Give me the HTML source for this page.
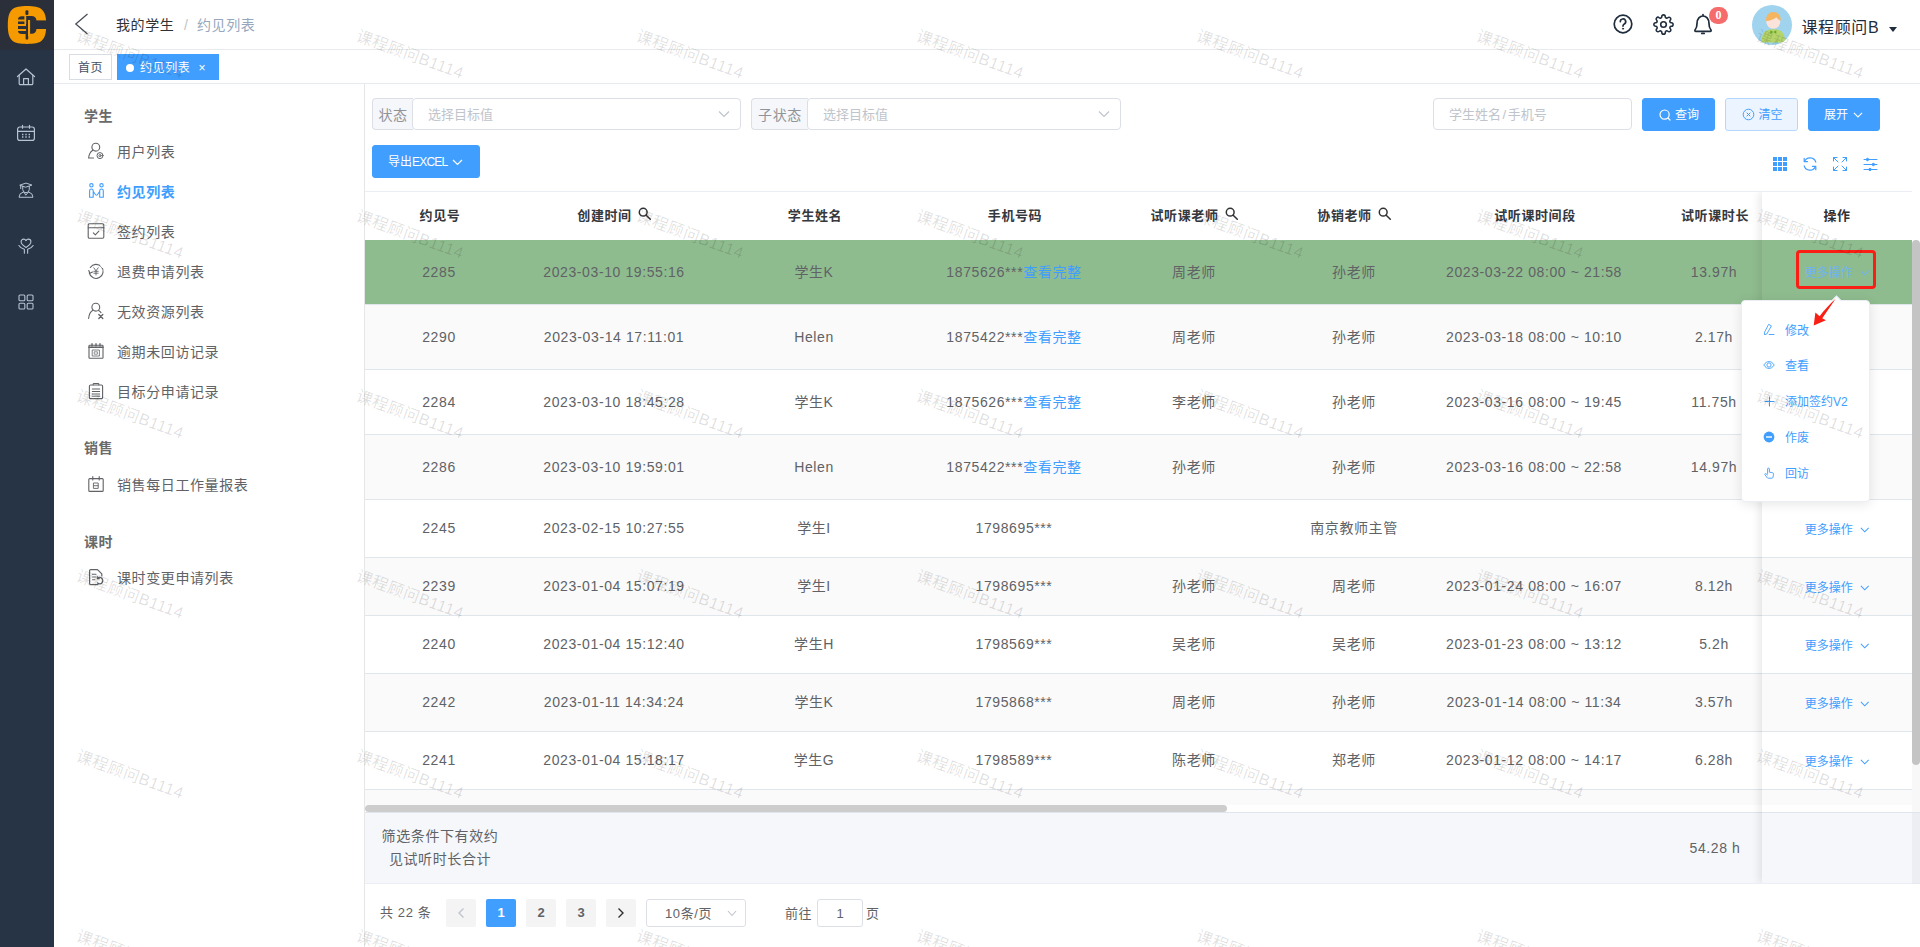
<!DOCTYPE html>
<html lang="zh-CN">
<head>
<meta charset="utf-8">
<title>约见列表</title>
<style>
*{box-sizing:border-box;margin:0;padding:0}
html,body{width:1920px;height:947px;overflow:hidden;background:#fff}
body{position:relative;font-family:"Liberation Sans","Noto Sans CJK SC",sans-serif;font-size:14px;color:#606266;letter-spacing:.6px}
.abs{position:absolute}
.ns{letter-spacing:0}
svg{display:block}
#side{position:absolute;left:0;top:0;width:54px;height:947px;background:#263445}
#logo{position:absolute;left:0;top:0;width:54px;height:50px;background:#2b2f3a}
.sico{position:absolute;left:15px;width:22px;height:22px}
#hdr{position:absolute;left:54px;top:0;width:1866px;height:50px;background:#fff;border-bottom:1px solid #e8eaee}
#tags{position:absolute;left:54px;top:50px;width:1866px;height:34px;background:#fff;border-bottom:1px solid #e6e9ef}
.tag{position:absolute;top:4px;height:26px;line-height:26px;font-size:12px;border:1px solid #d8dce5;color:#495060;background:#fff;padding:0 8px;white-space:nowrap}
.tag.on{background:#409eff;border-color:#409eff;color:#fff}
#menu{position:absolute;left:54px;top:84px;width:311px;height:863px;background:#fff;border-right:1px solid #e6e6e6}
.mt{position:absolute;left:30px;font-size:14px;font-weight:700;color:#6a6a6a;line-height:20px;height:20px}
.mi{position:absolute;left:63px;font-size:14px;color:#606266;line-height:20px;height:20px;white-space:nowrap}
.mi.on{color:#409eff;font-weight:700}
.mico{position:absolute;left:33px;width:18px;height:18px}
#main{position:absolute;left:365px;top:84px;width:1555px;height:863px;background:#fff}
.lab{position:absolute;top:14px;height:32px;line-height:32px;background:#f5f7fa;border:1px solid #dcdfe6;border-right:0;border-radius:4px 0 0 4px;color:#909399;font-size:14px;text-align:center}
.sel{position:absolute;top:14px;height:32px;line-height:32px;border:1px solid #dcdfe6;border-radius:4px;background:#fff;color:#c0c4cc;font-size:13px;padding-left:15px;letter-spacing:0}
.btn{position:absolute;height:33px;border-radius:3px;background:#409eff;border:1px solid #409eff;color:#fff;font-size:12px;line-height:33px;white-space:nowrap;letter-spacing:0}
.btn.plain{background:#ecf5ff;border-color:#b3d8ff;color:#409eff}
.chev{position:absolute;right:10px;top:11px;width:12px;height:8px}
#tbl{position:absolute;left:0;top:107px;width:1547px;height:692px;border-top:1px solid #ebeef5}
.th{position:absolute;top:0;height:48px;line-height:47px;text-align:center;font-weight:700;color:#35383d;font-size:13px;white-space:nowrap}
.row{position:absolute;left:0;width:1547px;border-bottom:1px solid #dfe6ec;background:#fff;overflow:hidden}
.row.s{background:#fafafa}
.row.g{background:#8fbc8f}
.c{position:absolute;top:0;height:100%;text-align:center;white-space:nowrap;color:#606266;font-size:14px}
.r65 .c{line-height:64px}
.r58 .c{line-height:57px}
.lk{color:#409eff}
#fix{position:absolute;left:1397px;top:108px;width:150px;height:691px;box-shadow:-3px 0 8px rgba(0,0,0,.09);clip-path:inset(0 0 0 -14px)}
.more{position:absolute;left:0;width:150px;text-align:center;font-size:12px;color:#409eff;white-space:nowrap;letter-spacing:0}
#dd{position:absolute;left:1741px;top:300px;width:129px;height:202px;background:#fff;border:1px solid #ebeef5;border-radius:4px;box-shadow:0 2px 12px 0 rgba(0,0,0,.1);letter-spacing:0}
#dd .it{position:absolute;left:43px;font-size:12px;color:#409eff;line-height:20px;white-space:nowrap}
#dd svg{position:absolute;left:21px}
#wm{position:absolute;left:0;top:0;width:1920px;height:947px;overflow:hidden;pointer-events:none}
#wm span{position:absolute;width:160px;height:24px;margin-left:-80px;margin-top:-12px;line-height:24px;text-align:center;font-size:16px;color:rgba(0,0,0,.13);transform:rotate(20deg);white-space:nowrap;letter-spacing:.55px}
</style>
</head>
<body>
<div id="side"><div id="logo">
<svg width="54" height="50" viewBox="0 0 54 50">
<path d="M27 6C41 6 46.200 9 46.200 25C46.200 41 41 43.900 27 43.900C13 43.900 7.800 41 7.800 25C7.800 9 13 6 27 6Z" fill="#f59a00"/>
<rect x="36" y="20.400" width="11" height="8.600" fill="#2b2f3a"/>
<path d="M26 15.900H31.500C34.500 15.900 36.400 17.500 36.400 20.400V29C36.400 32 34.500 33.800 31.500 33.800H26Z" fill="#2b2f3a"/>
<path d="M18 19.600C18 17.400 19.600 16.300 21.800 16.300H24.600V19.600Z M18 21.600H24.600V23.900H18Z M18 26H27.600V28.900H18Z M18 31H27.600V33.900H21.800C19.600 33.900 18 32.900 18 31Z" fill="#2b2f3a"/>
<rect x="25.400" y="10.200" width="3" height="4.800" rx="1.200" fill="#2b2f3a"/>
<rect x="25.600" y="31" width="2.600" height="8.600" rx="1.200" fill="#2b2f3a"/>
<rect x="28" y="20" width="2.100" height="16" fill="#f59a00"/>
<rect x="24.600" y="15.900" width="1.600" height="8" fill="#f59a00"/>
</svg></div>
<svg class="sico" style="top:66px" viewBox="0 0 22 22" fill="none" stroke="#b9c4d2" stroke-width="1.200" stroke-linejoin="round" stroke-linecap="round"><path d="M2.500 10.500L11 3l8.500 7.500"/><path d="M4.200 9.500V17.500a1.200 1.200 0 0 0 1.200 1.200H16.600a1.200 1.200 0 0 0 1.200-1.200V9.500"/><path d="M8.600 18.500V12.600h4.800V18.500"/></svg>
<svg class="sico" style="top:122px" viewBox="0 0 22 22" fill="none" stroke="#b9c4d2" stroke-width="1.200" stroke-linejoin="round" stroke-linecap="round"><rect x="2.600" y="5" width="16.800" height="13.400" rx="2.200"/><path d="M2.600 9.300H19.400M7.500 3.300V6.200M14.500 3.300V6.200"/><path d="M7 12.600h1.400M10.300 12.600h1.400M13.600 12.600h1.400M7 14.900h1.400M10.300 14.900h1.400M13.600 14.900h1.400" stroke-width="1.500" stroke-linecap="butt"/></svg>
<svg class="sico" style="top:179.5px;left:16px;width:20px;height:20px" viewBox="0 0 22 22" fill="none" stroke="#b9c4d2" stroke-width="1.100" stroke-linejoin="round" stroke-linecap="round"><path d="M4.500 5.600L11 3.400l6.500 2.200L11 7.800Z"/><path d="M5.200 6.200V9.500M7.400 7V10.400a3.600 3.600 0 0 0 7.200 0V7"/><path d="M8.300 13.200L4.600 15.200L3.300 19H18.700L17.400 15.200L13.700 13.200L11 16.400Z"/></svg>
<svg class="sico" style="top:235.5px;left:16px;width:20px;height:20px" viewBox="0 0 22 22" fill="none" stroke="#b9c4d2" stroke-width="1.200" stroke-linejoin="round" stroke-linecap="round"><path d="M11 12.600C6.800 10 5.600 8 5.600 6.300C5.600 4.500 7 3.400 8.400 3.400C9.600 3.400 10.500 4.100 11 5.100C11.500 4.100 12.400 3.400 13.600 3.400C15 3.400 16.400 4.500 16.400 6.300C16.400 8 15.200 10 11 12.600Z"/><path d="M3.200 10.500C4.500 13 6.800 13.800 9.200 14.600V19M18.800 10.500C17.500 13 15.200 13.800 12.800 14.600V19"/></svg>
<svg class="sico" style="top:291.5px;left:16px;width:20px;height:20px" viewBox="0 0 22 22" fill="none" stroke="#b9c4d2" stroke-width="1.200" stroke-linejoin="round"><rect x="3.300" y="3.300" width="6.400" height="6.400" rx="1.200"/><rect x="12.300" y="3.300" width="6.400" height="6.400" rx="1.200"/><rect x="3.300" y="12.300" width="6.400" height="6.400" rx="1.200"/><rect x="12.300" y="12.300" width="6.400" height="6.400" rx="1.200"/></svg>
</div>
<div id="hdr">
<svg class="abs" style="left:20px;top:13px" width="15" height="22" viewBox="0 0 15 22" fill="none" stroke="#4a4f58" stroke-width="1.300"><path d="M13.500 1L1.800 11L13.500 21"/></svg>
<span class="abs" style="left:62px;top:15px;line-height:20px;font-size:14px;color:#303133;white-space:nowrap">我的学生</span>
<span class="abs" style="left:130px;top:15px;line-height:20px;font-size:14px;color:#c0c4cc">/</span>
<span class="abs" style="left:143px;top:15px;line-height:20px;font-size:14px;color:#97a8be;white-space:nowrap">约见列表</span>
<svg class="abs" style="left:1558px;top:13px" width="22" height="22" viewBox="0 0 22 22" fill="none" stroke="#1f2d3d" stroke-width="1.700" stroke-linecap="round"><circle cx="11" cy="11" r="8.800"/><path d="M8.300 8.600a2.700 2.700 0 1 1 4 2.400c-.9.500-1.300 1-1.300 2.100"/><circle cx="11" cy="15.700" r=".6" fill="#1f2d3d" stroke-width=".8"/></svg>
<svg class="abs" style="left:1598.500px;top:13.500px" width="21" height="21" viewBox="0 0 24 24" fill="none" stroke="#1f2d3d" stroke-width="1.800" stroke-linejoin="round"><circle cx="12" cy="12" r="3.200"/><path d="M19.400 15a1.650 1.650 0 0 0 .33 1.820l.06.06a2 2 0 1 1-2.830 2.830l-.06-.06a1.650 1.650 0 0 0-1.820-.33 1.650 1.650 0 0 0-1 1.510V21a2 2 0 0 1-4 0v-.09A1.650 1.650 0 0 0 9 19.400a1.650 1.650 0 0 0-1.820.33l-.06.06a2 2 0 1 1-2.830-2.830l.06-.06a1.650 1.650 0 0 0 .33-1.820 1.650 1.650 0 0 0-1.510-1H3a2 2 0 0 1 0-4h.09A1.650 1.650 0 0 0 4.600 9a1.650 1.650 0 0 0-.33-1.820l-.06-.06a2 2 0 1 1 2.830-2.830l.06.06a1.650 1.650 0 0 0 1.820.33H9a1.650 1.650 0 0 0 1-1.510V3a2 2 0 0 1 4 0v.09a1.650 1.650 0 0 0 1 1.510 1.650 1.650 0 0 0 1.820-.33l.06-.06a2 2 0 1 1 2.830 2.830l-.06.06a1.650 1.650 0 0 0-.33 1.820V9a1.650 1.650 0 0 0 1.510 1H21a2 2 0 0 1 0 4h-.09a1.650 1.650 0 0 0-1.510 1z"/></svg>
<svg class="abs" style="left:1637px;top:12px" width="24" height="24" viewBox="0 0 24 24" fill="none" stroke="#1f2d3d" stroke-width="1.700" stroke-linejoin="round" stroke-linecap="round"><path d="M12 2.500V4M4.300 17.500C5.800 16 6 14.500 6 11.500C6 6.500 9 4 12 4S18 6.500 18 11.500C18 14.500 18.200 16 19.700 17.500C20.500 18.600 20.100 19.300 19.100 19.300H4.900C3.900 19.300 3.500 18.600 4.300 17.500Z"/><path d="M10.800 21.400h2.400"/></svg>
<span class="abs ns" style="left:1655px;top:7px;width:19px;height:17px;border-radius:9px;background:#f56c6c;color:#fff;font-size:12px;line-height:17px;text-align:center;font-family:'Liberation Serif',serif;font-weight:700">0</span>
<svg class="abs" style="left:1698px;top:5px" width="40" height="40" viewBox="0 0 40 40"><defs><clipPath id="av"><circle cx="20" cy="20" r="20"/></clipPath></defs><g clip-path="url(#av)"><rect width="40" height="40" fill="#9fd3ee"/><path d="M9.500 37.500C9.500 28 13 24.300 21.300 24.300S33 28 33 37.500Z" fill="#b5d56a"/><path d="M21.300 27l-3-1.800v3.800Zl3-1.800v3.800Z" fill="#6aa82a"/><circle cx="21.300" cy="16.800" r="7" fill="#fbe3dc"/><path d="M14.100 16C13.600 10.500 17 6.800 21.800 7C26.500 7.200 29 10.500 28.600 15.800C26.800 15 25.200 13.600 24.400 12.200C22 14.200 17.800 15.800 14.100 16Z" fill="#f5b561"/></g></svg>
<span class="abs" style="left:1747.500px;top:16px;line-height:24px;font-size:16px;color:#1f2d3d;white-space:nowrap">课程顾问B</span>
<span class="abs" style="left:1835px;top:27px;width:0;height:0;border:4px solid transparent;border-top:5px solid #1f2d3d"></span>
</div>
<div id="tags">
<span class="tag" style="left:15px;width:43px">首页</span>
<span class="tag on" style="left:63px;width:102px"><i style="display:inline-block;width:8px;height:8px;border-radius:50%;background:#fff;margin-right:6px;position:relative;top:0px"></i>约见列表<i style="font-style:normal;font-size:12px;margin-left:8px;position:relative;top:0px">×</i></span>
</div>
<div id="menu">
<div class="mt" style="top:22px">学生</div>
<svg class="mico" style="top:58px" viewBox="0 0 18 18" fill="none" stroke="#606266" stroke-width="1.1" stroke-linejoin="round" stroke-linecap="round"><circle cx="8.800" cy="5.200" r="3.900"/><path d="M5.800 8.300C3.300 9.800 2 12.500 1.600 16H6.500"/><circle cx="13" cy="13.600" r="3" stroke-width="1"/><circle cx="13" cy="13.600" r="1.100" stroke-width=".9"/></svg>
<div class="mi" style="top:58px">用户列表</div>
<svg class="mico" style="top:98px" viewBox="0 0 18 18" fill="none" stroke="#409eff" stroke-width="1.1" stroke-linejoin="round" stroke-linecap="round"><circle cx="4.400" cy="3.300" r="1.700"/><circle cx="14.500" cy="3.300" r="1.700"/><path d="M2.600 15.300V8.800A1.800 1.800 0 0 1 6.200 8.800V15.300ZM12.700 15.300V8.800A1.800 1.800 0 0 1 16.300 8.800V15.300ZM6.200 9.600C7.600 11 8.400 13.200 9.450 13.200S11.300 11 12.700 9.600"/></svg>
<div class="mi on" style="top:98px">约见列表</div>
<svg class="mico" style="top:138px" viewBox="0 0 18 18" fill="none" stroke="#606266" stroke-width="1.1" stroke-linejoin="round" stroke-linecap="round"><rect x="1.200" y="1.800" width="15.600" height="14.400" rx="1.200"/><path d="M1.200 5.800H16.800M6.300 10.800L8.300 12.800L11.900 9.200"/></svg>
<div class="mi" style="top:138px">签约列表</div>
<svg class="mico" style="top:178px" viewBox="0 0 18 18" fill="none" stroke="#606266" stroke-width="1.1" stroke-linejoin="round" stroke-linecap="round"><path d="M3.300 5.500A7 7 0 1 1 2.300 11"/><path d="M1.800 8.500L2.800 11.300L5.500 10"/><path d="M6.800 5.800L9 8.800L11.200 5.800M9 8.800V13M6.800 9.300H11.200M6.800 11.200H11.200" stroke-width=".9"/><path d="M14.500 3.200L15.800 4.800" stroke="#fff" stroke-width="2.500"/></svg>
<div class="mi" style="top:178px">退费申请列表</div>
<svg class="mico" style="top:218px" viewBox="0 0 18 18" fill="none" stroke="#606266" stroke-width="1.1" stroke-linejoin="round" stroke-linecap="round"><circle cx="8.800" cy="5.200" r="3.900"/><path d="M5.800 8.300C3.300 9.800 2 12.500 1.600 16.500"/><path d="M11.600 8.400C12.600 8.900 13.400 9.700 14 10.600"/><path d="M11.800 12.500L15.800 16.500M15.800 12.500L11.800 16.500" stroke-width="1.300"/></svg>
<div class="mi" style="top:218px">无效资源列表</div>
<svg class="mico" style="top:258px" viewBox="0 0 18 18" fill="none" stroke="#606266" stroke-width="1.1" stroke-linejoin="round" stroke-linecap="round"><rect x="2" y="3.300" width="14" height="13" rx=".6"/><path d="M2 5.200H16" stroke-width="1.600"/><path d="M5 1.700V4M9 1.700V4M13 1.700V4" stroke-width="1.300"/><rect x="5.600" y="8" width="6.800" height="6" stroke-width=".8"/><rect x="7.600" y="9.800" width="2.800" height="2.400" stroke-width=".7"/></svg>
<div class="mi" style="top:258px">逾期未回访记录</div>
<svg class="mico" style="top:298px" viewBox="0 0 18 18" fill="none" stroke="#606266" stroke-width="1.1" stroke-linejoin="round" stroke-linecap="round"><rect x="2.400" y="3" width="13.200" height="13.600" rx="1.200"/><path d="M6.200 3V1.500H11.800V3M5.300 7H12.700M5.300 9.500H12.700M5.300 12H12.700M5.300 14.200H12.700" stroke-width="1"/></svg>
<div class="mi" style="top:298px">目标分申请记录</div>
<div class="mt" style="top:354px">销售</div>
<svg class="mico" style="top:391px" viewBox="0 0 18 18" fill="none" stroke="#606266" stroke-width="1.1" stroke-linejoin="round" stroke-linecap="round"><rect x="1.800" y="3.600" width="14.400" height="12.800" rx="1"/><path d="M5.800 1.600V5M12.200 1.600V5"/><rect x="6.800" y="8" width="4.400" height="5.400" stroke-width=".9"/><path d="M6.800 10.700H11.200" stroke-width=".9"/></svg>
<div class="mi" style="top:391px">销售每日工作量报表</div>
<div class="mt" style="top:448px">课时</div>
<svg class="mico" style="top:484px" viewBox="0 0 18 18" fill="none" stroke="#606266" stroke-width="1.1" stroke-linejoin="round" stroke-linecap="round"><path d="M11 16.600H3.600A1 1 0 0 1 2.600 15.600V2.600A1 1 0 0 1 3.600 1.600H10.500L14.800 5.900V8" stroke-width="1.200"/><path d="M5.500 6.200H9M5.500 9H9M5.500 11.800H8"/><path d="M10.500 10.300C12.500 8.300 15.800 9.800 15.800 12.600C15.800 15.300 12.800 17 10.600 15" stroke-width="1.300"/><path d="M10.300 8.500V10.600H12.400" stroke-width="1.100"/></svg>
<div class="mi" style="top:484px">课时变更申请列表</div>
</div>
<div id="main">
<div class="lab" style="left:7px;width:41px">状态</div>
<div class="sel" style="left:47px;width:329px">选择目标值<svg class="chev" viewBox="0 0 12 8" fill="none" stroke="#c0c4cc" stroke-width="1.200"><path d="M1 1.500L6 6.500L11 1.500"/></svg></div>
<div class="lab" style="left:386px;width:57px">子状态</div>
<div class="sel" style="left:442px;width:314px">选择目标值<svg class="chev" viewBox="0 0 12 8" fill="none" stroke="#c0c4cc" stroke-width="1.200"><path d="M1 1.500L6 6.500L11 1.500"/></svg></div>
<div class="sel" style="left:1068px;width:199px">学生姓名<span style="padding:0 1.500px">/</span>手机号</div>
<div class="btn" style="left:1277px;top:14px;width:73px"><svg class="abs" style="left:16px;top:10px" width="12" height="12" viewBox="0 0 12 12" fill="none" stroke="#fff" stroke-width="1.200" stroke-linecap="round"><circle cx="5.600" cy="5.600" r="4.600"/><path d="M9 9L11 11"/></svg><span class="abs" style="left:32px;top:0">查询</span></div>
<div class="btn plain" style="left:1360px;top:14px;width:73px"><svg class="abs" style="left:16px;top:9px" width="13" height="13" viewBox="0 0 13 13" fill="none" stroke="#409eff" stroke-width="1"><circle cx="6.500" cy="6.500" r="5.300"/><path d="M4.700 4.700L8.300 8.300M8.300 4.700L4.700 8.300"/></svg><span class="abs" style="left:32.500px;top:0">清空</span></div>
<div class="btn" style="left:1443px;top:14px;width:72px"><span class="abs" style="left:15px;top:0">展开</span><svg style="position:absolute;left:44px;top:13px" width="10" height="6.36" viewBox="0 0 11 7" fill="none" stroke="#fff" stroke-width="1.21"><path d="M1 1L5.500 5.500L10 1"/></svg></div>
<div class="btn" style="left:7px;top:61px;width:108px"><span class="abs" style="left:15px;top:0">导出<span style="letter-spacing:-.8px">EXCEL</span></span><svg style="position:absolute;left:79px;top:13px" width="11" height="7.00" viewBox="0 0 11 7" fill="none" stroke="#fff" stroke-width="1.20"><path d="M1 1L5.500 5.500L10 1"/></svg></div>
<svg class="abs" style="left:1408px;top:73px" width="14" height="14" viewBox="0 0 14 14" fill="#409eff"><rect x="0" y="0" width="4" height="4"/><rect x="5" y="0" width="4" height="4"/><rect x="10" y="0" width="4" height="4"/><rect x="0" y="5" width="4" height="4"/><rect x="5" y="5" width="4" height="4"/><rect x="10" y="5" width="4" height="4"/><rect x="0" y="10" width="4" height="4"/><rect x="5" y="10" width="4" height="4"/><rect x="10" y="10" width="4" height="4"/></svg>
<svg class="abs" style="left:1437px;top:72px" width="16" height="16" viewBox="0 0 16 16" fill="none" stroke="#409eff" stroke-width="1.200" stroke-linecap="round" stroke-linejoin="round"><path d="M13.800 6.200A6 6 0 0 0 2.600 5.300M2.200 9.800A6 6 0 0 0 13.400 10.700"/><path d="M2.200 2.300V5.600H5.500M13.800 13.700V10.400H10.500"/></svg>
<svg class="abs" style="left:1467px;top:72px" width="16" height="16" viewBox="0 0 16 16" fill="none" stroke="#409eff" stroke-width="1" stroke-linecap="round" stroke-linejoin="round"><path d="M1.500 5V1.500H5M11 1.500H14.500V5M14.500 11V14.500H11M5 14.500H1.500V11M1.500 1.500L6 6M14.500 1.500L10 6M14.500 14.500L10 10M1.500 14.500L6 10"/></svg>
<svg class="abs" style="left:1497px;top:72px" width="16" height="16" viewBox="0 0 16 16" fill="none" stroke="#409eff" stroke-width="1" stroke-linecap="round"><path d="M2 3.500H15M2 8.500H15M2 13.500H15"/><circle cx="5.500" cy="3.500" r="1.200" fill="#409eff"/><circle cx="11.400" cy="8.500" r="1.200" fill="#409eff"/><circle cx="8" cy="13.500" r="1.200" fill="#409eff"/></svg>
<div id="tbl">
<div class="th" style="left:1px;width:148px">约见号</div>
<div class="th" style="left:149px;width:200px">创建时间<svg style="display:inline-block;vertical-align:middle;margin-left:6px;position:relative;top:-3px" width="13" height="13" viewBox="0 0 13 13" fill="none" stroke="#303133" stroke-width="1.500"><circle cx="5.200" cy="5.200" r="3.900"/><path d="M8.200 8.200L12.300 12.300" stroke-linecap="round"/></svg></div>
<div class="th" style="left:350px;width:200px">学生姓名</div>
<div class="th" style="left:550px;width:200px">手机号码</div>
<div class="th" style="left:749px;width:160px">试听课老师<svg style="display:inline-block;vertical-align:middle;margin-left:6px;position:relative;top:-3px" width="13" height="13" viewBox="0 0 13 13" fill="none" stroke="#303133" stroke-width="1.500"><circle cx="5.200" cy="5.200" r="3.900"/><path d="M8.200 8.200L12.300 12.300" stroke-linecap="round"/></svg></div>
<div class="th" style="left:909px;width:160px">协销老师<svg style="display:inline-block;vertical-align:middle;margin-left:6px;position:relative;top:-3px" width="13" height="13" viewBox="0 0 13 13" fill="none" stroke="#303133" stroke-width="1.500"><circle cx="5.200" cy="5.200" r="3.900"/><path d="M8.200 8.200L12.300 12.300" stroke-linecap="round"/></svg></div>
<div class="th" style="left:1070px;width:200px">试听课时间段</div>
<div class="th" style="left:1270px;width:160px">试听课时长</div>
<div class="row g r65" style="top:48px;height:65px">
<span class="c" style="left:0px;width:148px">2285</span>
<span class="c" style="left:149px;width:200px">2023-03-10 19:55:16</span>
<span class="c" style="left:349px;width:200px">学生K</span>
<span class="c" style="left:549px;width:200px">1875626***<span class="lk">查看完整</span></span>
<span class="c" style="left:749px;width:160px">周老师</span>
<span class="c" style="left:909px;width:160px">孙老师</span>
<span class="c" style="left:1069px;width:200px">2023-03-22 08:00 ~ 21:58</span>
<span class="c" style="left:1269px;width:160px">13.97h</span>
</div>
<div class="row s r65" style="top:113px;height:65px">
<span class="c" style="left:0px;width:148px">2290</span>
<span class="c" style="left:149px;width:200px">2023-03-14 17:11:01</span>
<span class="c" style="left:349px;width:200px">Helen</span>
<span class="c" style="left:549px;width:200px">1875422***<span class="lk">查看完整</span></span>
<span class="c" style="left:749px;width:160px">周老师</span>
<span class="c" style="left:909px;width:160px">孙老师</span>
<span class="c" style="left:1069px;width:200px">2023-03-18 08:00 ~ 10:10</span>
<span class="c" style="left:1269px;width:160px">2.17h</span>
</div>
<div class="row r65" style="top:178px;height:65px">
<span class="c" style="left:0px;width:148px">2284</span>
<span class="c" style="left:149px;width:200px">2023-03-10 18:45:28</span>
<span class="c" style="left:349px;width:200px">学生K</span>
<span class="c" style="left:549px;width:200px">1875626***<span class="lk">查看完整</span></span>
<span class="c" style="left:749px;width:160px">李老师</span>
<span class="c" style="left:909px;width:160px">孙老师</span>
<span class="c" style="left:1069px;width:200px">2023-03-16 08:00 ~ 19:45</span>
<span class="c" style="left:1269px;width:160px">11.75h</span>
</div>
<div class="row s r65" style="top:243px;height:65px">
<span class="c" style="left:0px;width:148px">2286</span>
<span class="c" style="left:149px;width:200px">2023-03-10 19:59:01</span>
<span class="c" style="left:349px;width:200px">Helen</span>
<span class="c" style="left:549px;width:200px">1875422***<span class="lk">查看完整</span></span>
<span class="c" style="left:749px;width:160px">孙老师</span>
<span class="c" style="left:909px;width:160px">孙老师</span>
<span class="c" style="left:1069px;width:200px">2023-03-16 08:00 ~ 22:58</span>
<span class="c" style="left:1269px;width:160px">14.97h</span>
</div>
<div class="row r58" style="top:308px;height:58px">
<span class="c" style="left:0px;width:148px">2245</span>
<span class="c" style="left:149px;width:200px">2023-02-15 10:27:55</span>
<span class="c" style="left:349px;width:200px">学生I</span>
<span class="c" style="left:549px;width:200px">1798695***</span>
<span class="c" style="left:909px;width:160px">南京教师主管</span>
</div>
<div class="row s r58" style="top:366px;height:58px">
<span class="c" style="left:0px;width:148px">2239</span>
<span class="c" style="left:149px;width:200px">2023-01-04 15:07:19</span>
<span class="c" style="left:349px;width:200px">学生I</span>
<span class="c" style="left:549px;width:200px">1798695***</span>
<span class="c" style="left:749px;width:160px">孙老师</span>
<span class="c" style="left:909px;width:160px">周老师</span>
<span class="c" style="left:1069px;width:200px">2023-01-24 08:00 ~ 16:07</span>
<span class="c" style="left:1269px;width:160px">8.12h</span>
</div>
<div class="row r58" style="top:424px;height:58px">
<span class="c" style="left:0px;width:148px">2240</span>
<span class="c" style="left:149px;width:200px">2023-01-04 15:12:40</span>
<span class="c" style="left:349px;width:200px">学生H</span>
<span class="c" style="left:549px;width:200px">1798569***</span>
<span class="c" style="left:749px;width:160px">吴老师</span>
<span class="c" style="left:909px;width:160px">吴老师</span>
<span class="c" style="left:1069px;width:200px">2023-01-23 08:00 ~ 13:12</span>
<span class="c" style="left:1269px;width:160px">5.2h</span>
</div>
<div class="row s r58" style="top:482px;height:58px">
<span class="c" style="left:0px;width:148px">2242</span>
<span class="c" style="left:149px;width:200px">2023-01-11 14:34:24</span>
<span class="c" style="left:349px;width:200px">学生K</span>
<span class="c" style="left:549px;width:200px">1795868***</span>
<span class="c" style="left:749px;width:160px">周老师</span>
<span class="c" style="left:909px;width:160px">孙老师</span>
<span class="c" style="left:1069px;width:200px">2023-01-14 08:00 ~ 11:34</span>
<span class="c" style="left:1269px;width:160px">3.57h</span>
</div>
<div class="row r58" style="top:540px;height:58px">
<span class="c" style="left:0px;width:148px">2241</span>
<span class="c" style="left:149px;width:200px">2023-01-04 15:18:17</span>
<span class="c" style="left:349px;width:200px">学生G</span>
<span class="c" style="left:549px;width:200px">1798589***</span>
<span class="c" style="left:749px;width:160px">陈老师</span>
<span class="c" style="left:909px;width:160px">郑老师</span>
<span class="c" style="left:1069px;width:200px">2023-01-12 08:00 ~ 14:17</span>
<span class="c" style="left:1269px;width:160px">6.28h</span>
</div>
<div class="row s" style="top:598px;height:15px;border-bottom:0"></div>
<div class="abs" style="left:0;top:613px;width:862px;height:7px;border-radius:4px;background:#cdcdcd"></div>
<div class="abs" style="left:0;top:620px;width:1547px;height:72px;background:#f5f7fa;border-top:1px solid #dfe6ec;border-bottom:1px solid #ebeef5"></div>
<div class="abs" style="left:1px;top:633px;width:148px;text-align:center;line-height:23px;font-size:14px;color:#606266">筛选条件下有效约<br>见试听时长合计</div>
<div class="abs" style="left:1270px;top:620px;width:160px;text-align:center;line-height:72px;font-size:14px;color:#606266;white-space:nowrap">54.28 h</div>
</div>
<div id="fix">
<div class="abs" style="left:0;top:0;width:150px;height:48px;background:#fff;line-height:47px;text-align:center;font-weight:700;font-size:13px;color:#303133">操作</div>
<div class="abs" style="left:0;top:48px;width:150px;height:65px;background:#8fbc8f;border-bottom:1px solid #dfe6ec"></div>
<div class="more" style="top:48px;line-height:67px;color:#6db3f2">更多操作<svg style="display:inline-block;margin-left:7px;position:relative;top:-1px" width="9.5" height="6.05" viewBox="0 0 11 7" fill="none" stroke="#6db3f2" stroke-width="1.16"><path d="M1 1L5.500 5.500L10 1"/></svg></div>
<div class="abs" style="left:0;top:113px;width:150px;height:65px;background:#fafafa;border-bottom:1px solid #dfe6ec"></div>
<div class="more" style="top:113px;line-height:67px;color:#409eff">更多操作<svg style="display:inline-block;margin-left:7px;position:relative;top:-1px" width="9.5" height="6.05" viewBox="0 0 11 7" fill="none" stroke="#409eff" stroke-width="1.16"><path d="M1 1L5.500 5.500L10 1"/></svg></div>
<div class="abs" style="left:0;top:178px;width:150px;height:65px;background:#fff;border-bottom:1px solid #dfe6ec"></div>
<div class="more" style="top:178px;line-height:67px;color:#409eff">更多操作<svg style="display:inline-block;margin-left:7px;position:relative;top:-1px" width="9.5" height="6.05" viewBox="0 0 11 7" fill="none" stroke="#409eff" stroke-width="1.16"><path d="M1 1L5.500 5.500L10 1"/></svg></div>
<div class="abs" style="left:0;top:243px;width:150px;height:65px;background:#fafafa;border-bottom:1px solid #dfe6ec"></div>
<div class="more" style="top:243px;line-height:67px;color:#409eff">更多操作<svg style="display:inline-block;margin-left:7px;position:relative;top:-1px" width="9.5" height="6.05" viewBox="0 0 11 7" fill="none" stroke="#409eff" stroke-width="1.16"><path d="M1 1L5.500 5.500L10 1"/></svg></div>
<div class="abs" style="left:0;top:308px;width:150px;height:58px;background:#fff;border-bottom:1px solid #dfe6ec"></div>
<div class="more" style="top:308px;line-height:60px;color:#409eff">更多操作<svg style="display:inline-block;margin-left:7px;position:relative;top:-1px" width="9.5" height="6.05" viewBox="0 0 11 7" fill="none" stroke="#409eff" stroke-width="1.16"><path d="M1 1L5.500 5.500L10 1"/></svg></div>
<div class="abs" style="left:0;top:366px;width:150px;height:58px;background:#fafafa;border-bottom:1px solid #dfe6ec"></div>
<div class="more" style="top:366px;line-height:60px;color:#409eff">更多操作<svg style="display:inline-block;margin-left:7px;position:relative;top:-1px" width="9.5" height="6.05" viewBox="0 0 11 7" fill="none" stroke="#409eff" stroke-width="1.16"><path d="M1 1L5.500 5.500L10 1"/></svg></div>
<div class="abs" style="left:0;top:424px;width:150px;height:58px;background:#fff;border-bottom:1px solid #dfe6ec"></div>
<div class="more" style="top:424px;line-height:60px;color:#409eff">更多操作<svg style="display:inline-block;margin-left:7px;position:relative;top:-1px" width="9.5" height="6.05" viewBox="0 0 11 7" fill="none" stroke="#409eff" stroke-width="1.16"><path d="M1 1L5.500 5.500L10 1"/></svg></div>
<div class="abs" style="left:0;top:482px;width:150px;height:58px;background:#fafafa;border-bottom:1px solid #dfe6ec"></div>
<div class="more" style="top:482px;line-height:60px;color:#409eff">更多操作<svg style="display:inline-block;margin-left:7px;position:relative;top:-1px" width="9.5" height="6.05" viewBox="0 0 11 7" fill="none" stroke="#409eff" stroke-width="1.16"><path d="M1 1L5.500 5.500L10 1"/></svg></div>
<div class="abs" style="left:0;top:540px;width:150px;height:58px;background:#fff;border-bottom:1px solid #dfe6ec"></div>
<div class="more" style="top:540px;line-height:60px;color:#409eff">更多操作<svg style="display:inline-block;margin-left:7px;position:relative;top:-1px" width="9.5" height="6.05" viewBox="0 0 11 7" fill="none" stroke="#409eff" stroke-width="1.16"><path d="M1 1L5.500 5.500L10 1"/></svg></div>
<div class="abs" style="left:0;top:598px;width:150px;height:15px;background:#fafafa"></div>
<div class="abs" style="left:0;top:613px;width:150px;height:7px;background:#fff"></div>
<div class="abs" style="left:0;top:620px;width:150px;height:72px;background:#f5f7fa;border-top:1px solid #dfe6ec;border-bottom:1px solid #ebeef5"></div>
</div>
<div class="abs" style="left:1547px;top:681px;width:8px;height:47px;background:#f8f8f8"></div>
<div class="abs" style="left:1547px;top:728px;width:8px;height:72px;background:#eceef3;border-top:1px solid #dfe6ec;border-bottom:1px solid #e6e9ef"></div>
<div class="abs" style="left:1547px;top:156px;width:8px;height:525px;border-radius:4px;background:#c4c4c4"></div>
<div class="abs" style="left:15px;top:815px;line-height:28px;font-size:13px;color:#606266;white-space:nowrap">共 22 条</div>
<div class="abs ns" style="left:81px;top:815px;width:30px;height:28px;border-radius:2px;background:#f4f4f5;color:#c0c4cc;font-size:13px;font-weight:700;line-height:28px;text-align:center"><svg style="margin:8px auto 0" width="8" height="12" viewBox="0 0 8 12" fill="none" stroke="#c0c4cc" stroke-width="1.400"><path d="M6.500 1.500L2 6L6.500 10.500"/></svg></div>
<div class="abs ns" style="left:121px;top:815px;width:30px;height:28px;border-radius:2px;background:#409eff;color:#fff;font-size:13px;font-weight:700;line-height:28px;text-align:center">1</div>
<div class="abs ns" style="left:161px;top:815px;width:30px;height:28px;border-radius:2px;background:#f4f4f5;color:#606266;font-size:13px;font-weight:700;line-height:28px;text-align:center">2</div>
<div class="abs ns" style="left:201px;top:815px;width:30px;height:28px;border-radius:2px;background:#f4f4f5;color:#606266;font-size:13px;font-weight:700;line-height:28px;text-align:center">3</div>
<div class="abs ns" style="left:241px;top:815px;width:30px;height:28px;border-radius:2px;background:#f4f4f5;color:#606266;font-size:13px;font-weight:700;line-height:28px;text-align:center"><svg style="margin:8px auto 0" width="8" height="12" viewBox="0 0 8 12" fill="none" stroke="#303133" stroke-width="1.400"><path d="M1.500 1.500L6 6L1.500 10.500"/></svg></div>
<div class="abs" style="left:281px;top:815px;width:100px;height:28px;border:1px solid #dcdfe6;border-radius:3px;line-height:28px;font-size:13px;color:#606266;padding-left:18px;white-space:nowrap">10条/页<svg class="abs" style="right:8px;top:10px" width="10" height="7" viewBox="0 0 10 7" fill="none" stroke="#c0c4cc" stroke-width="1.100"><path d="M1 1L5 5.500L9 1"/></svg></div>
<div class="abs" style="left:420px;top:815px;line-height:30px;font-size:13px;color:#606266;white-space:nowrap">前往</div>
<div class="abs ns" style="left:452px;top:815px;width:46px;height:28px;border:1px solid #dcdfe6;border-radius:3px;line-height:28px;font-size:13px;color:#606266;text-align:center">1</div>
<div class="abs" style="left:501px;top:815px;line-height:30px;font-size:13px;color:#606266">页</div>
</div>
<div id="dd">
<div class="abs" style="left:90.500px;top:-4px;width:7px;height:7px;background:#fff;border-left:1px solid #ebeef5;border-top:1px solid #ebeef5;transform:rotate(45deg)"></div>
<svg style="top:22px" width="12" height="12" viewBox="0 0 12 12" fill="none" stroke="#409eff" stroke-width=".9" stroke-linejoin="round" stroke-linecap="round"><path d="M6 1.500L8.400 2.900L3.800 11L1.400 11.800L1.500 9.600Z"/><path d="M6.200 11.500H11"/></svg>
<div class="it" style="top:20px">修改</div>
<svg style="top:58px" width="12" height="12" viewBox="0 0 12 12" fill="none" stroke="#409eff" stroke-width=".9"><path d="M.8 6C2.500 3.300 4.200 2.600 6 2.600S9.500 3.300 11.200 6C9.500 8.700 7.800 9.400 6 9.400S2.500 8.700.8 6Z"/><circle cx="6" cy="6" r="2.100"/></svg>
<div class="it" style="top:55px">查看</div>
<svg style="top:94px" width="12" height="12" viewBox="0 0 12 12" fill="none" stroke="#409eff" stroke-width="1"><path d="M6.500 1.500V11.500M1.500 6.500H11.500"/></svg>
<div class="it" style="top:91px">添加签约V2</div>
<svg style="top:130px" width="12" height="12" viewBox="0 0 12 12"><circle cx="6" cy="6" r="5.400" fill="#409eff"/><rect x="3" y="5.300" width="6" height="1.400" fill="#fff"/></svg>
<div class="it" style="top:127px">作废</div>
<svg style="top:166px" width="12" height="12" viewBox="0 0 12 12" fill="none" stroke="#409eff" stroke-width=".9" stroke-linejoin="round" stroke-linecap="round"><path d="M4.600 6.500V2A.9.900 0 0 1 6.400 2V5.200L9.600 5.800C10.300 6 10.600 6.500 10.500 7.200L10 10.200C9.900 10.800 9.500 11.200 8.900 11.200H5.200C4.700 11.200 4.300 11 4 10.500L1.800 7.500C1.500 7 2.200 6.300 2.800 6.700L4.600 8"/></svg>
<div class="it" style="top:163px">回访</div>
</div>
<div class="abs" style="left:1796px;top:250px;width:80px;height:39px;border:3px solid #fa1e14;border-radius:4px"></div>
<svg class="abs" style="left:1805px;top:290px" width="40" height="42" viewBox="1805 290 40 42"><path d="M1835.600 298.800C1829.500 304.500 1824 310.500 1819.600 316.300L1815.400 312.600L1813.700 325.400L1825.900 320.200L1822.300 318.300C1826.500 312 1831 305.500 1835.600 298.800Z" fill="#fa1e14"/></svg>
<div id="wm">
<span style="left:129.5px;top:55px">课程顾问B1114</span>
<span style="left:409.5px;top:55px">课程顾问B1114</span>
<span style="left:689.5px;top:55px">课程顾问B1114</span>
<span style="left:969.5px;top:55px">课程顾问B1114</span>
<span style="left:1249.5px;top:55px">课程顾问B1114</span>
<span style="left:1529.5px;top:55px">课程顾问B1114</span>
<span style="left:1809.5px;top:55px">课程顾问B1114</span>
<span style="left:129.5px;top:235px">课程顾问B1114</span>
<span style="left:409.5px;top:235px">课程顾问B1114</span>
<span style="left:689.5px;top:235px">课程顾问B1114</span>
<span style="left:969.5px;top:235px">课程顾问B1114</span>
<span style="left:1249.5px;top:235px">课程顾问B1114</span>
<span style="left:1529.5px;top:235px">课程顾问B1114</span>
<span style="left:1809.5px;top:235px">课程顾问B1114</span>
<span style="left:129.5px;top:415px">课程顾问B1114</span>
<span style="left:409.5px;top:415px">课程顾问B1114</span>
<span style="left:689.5px;top:415px">课程顾问B1114</span>
<span style="left:969.5px;top:415px">课程顾问B1114</span>
<span style="left:1249.5px;top:415px">课程顾问B1114</span>
<span style="left:1529.5px;top:415px">课程顾问B1114</span>
<span style="left:1809.5px;top:415px">课程顾问B1114</span>
<span style="left:129.5px;top:595px">课程顾问B1114</span>
<span style="left:409.5px;top:595px">课程顾问B1114</span>
<span style="left:689.5px;top:595px">课程顾问B1114</span>
<span style="left:969.5px;top:595px">课程顾问B1114</span>
<span style="left:1249.5px;top:595px">课程顾问B1114</span>
<span style="left:1529.5px;top:595px">课程顾问B1114</span>
<span style="left:1809.5px;top:595px">课程顾问B1114</span>
<span style="left:129.5px;top:775px">课程顾问B1114</span>
<span style="left:409.5px;top:775px">课程顾问B1114</span>
<span style="left:689.5px;top:775px">课程顾问B1114</span>
<span style="left:969.5px;top:775px">课程顾问B1114</span>
<span style="left:1249.5px;top:775px">课程顾问B1114</span>
<span style="left:1529.5px;top:775px">课程顾问B1114</span>
<span style="left:1809.5px;top:775px">课程顾问B1114</span>
<span style="left:129.5px;top:955px">课程顾问B1114</span>
<span style="left:409.5px;top:955px">课程顾问B1114</span>
<span style="left:689.5px;top:955px">课程顾问B1114</span>
<span style="left:969.5px;top:955px">课程顾问B1114</span>
<span style="left:1249.5px;top:955px">课程顾问B1114</span>
<span style="left:1529.5px;top:955px">课程顾问B1114</span>
<span style="left:1809.5px;top:955px">课程顾问B1114</span>
</div>
</body>
</html>
